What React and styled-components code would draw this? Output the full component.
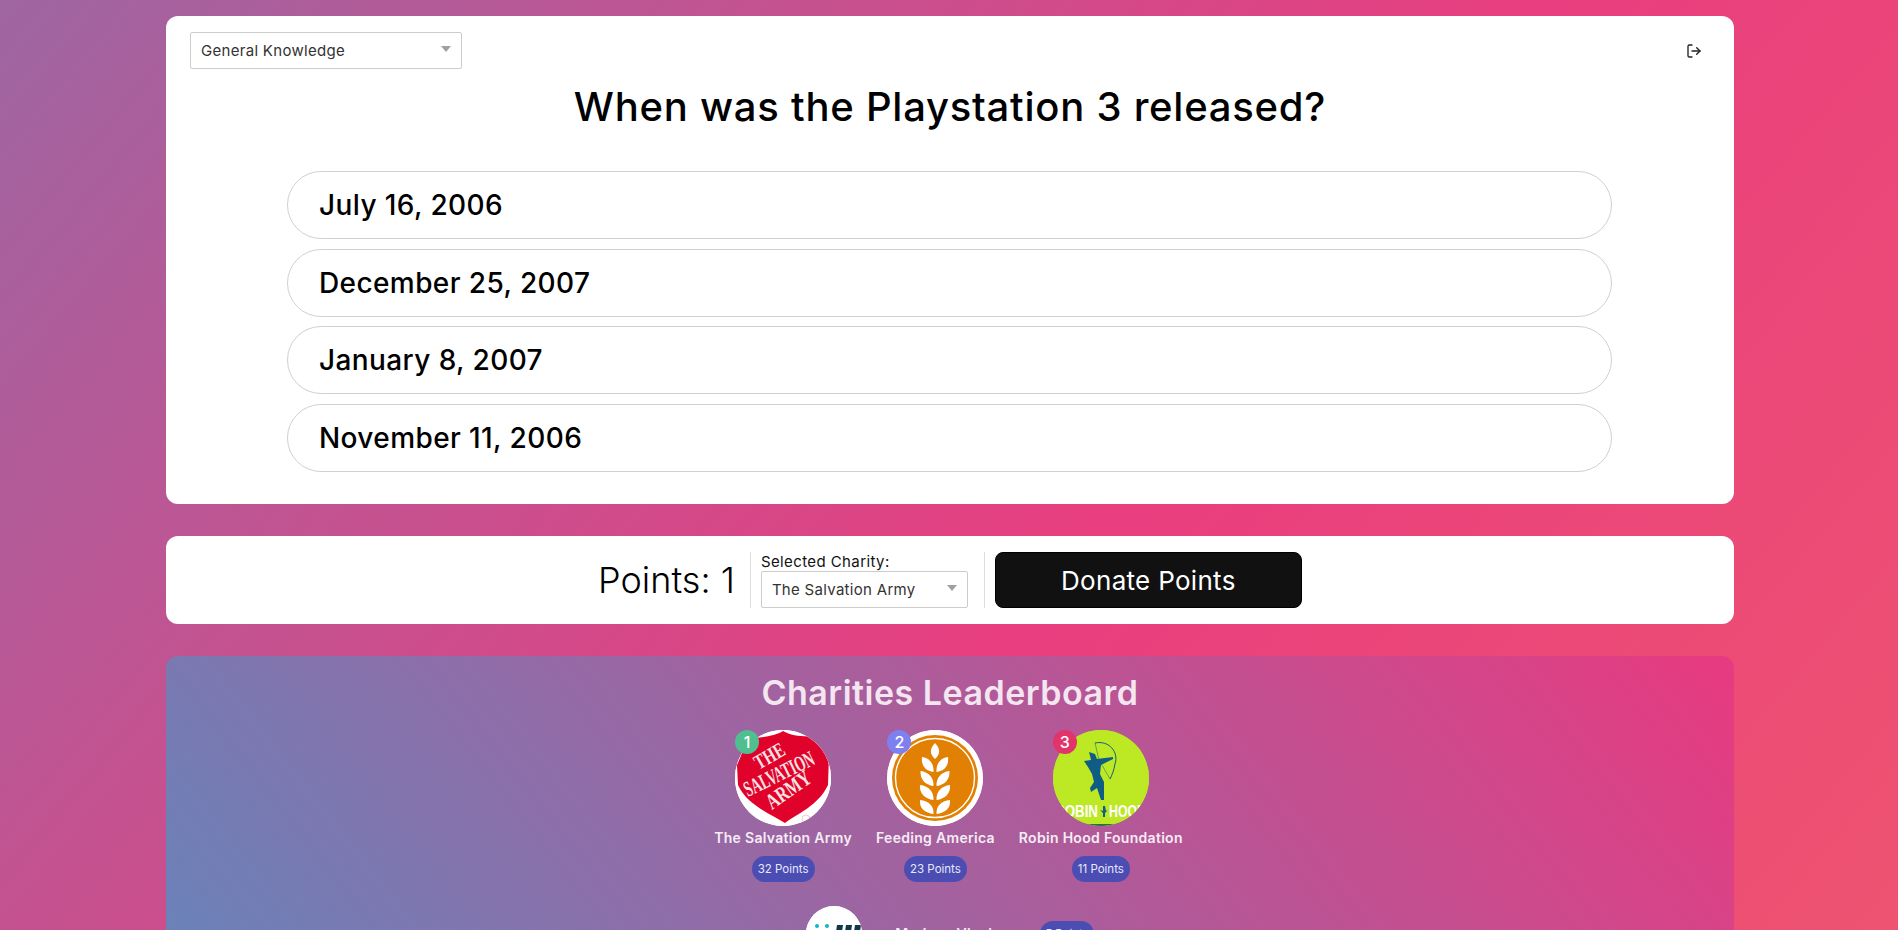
import React from 'react';
import styled, { createGlobalStyle } from 'styled-components';
import { LogOut } from 'lucide-react';

const FONT = `Inter, "Noto Sans", "Liberation Sans", sans-serif`;

const GlobalStyle = createGlobalStyle`
  html, body {
    margin: 0;
    padding: 0;
    height: 100%;
    overflow: hidden;
  }
  body {
    font-family: ${FONT};
    color: #000;
  }
  * { box-sizing: border-box; }
`;

const Page = styled.div`
  height: 930px;
  overflow: hidden;
  background: linear-gradient(130deg, #9e66a2 0%, #e93e7f 58%, #ee5370 100%);
  padding: 16px 0 0 2px;
  display: flex;
  flex-direction: column;
  align-items: center;
  gap: 32px;
`;

const Card = styled.section`
  width: 1568px;
  background: #fff;
  border-radius: 12px;
  flex-shrink: 0;
`;

const QuizCard = styled(Card)`
  height: 488px;
  padding: 16px 24px 32px;
`;

const QuizTop = styled.div`
  display: flex;
  justify-content: space-between;
  align-items: center;
`;

const SelectWrap = styled.div`
  position: relative;
  width: ${({ $width }) => $width}px;
  height: 37px;

  &::after {
    content: '';
    position: absolute;
    right: 11px;
    top: 14px;
    border-left: 5px solid transparent;
    border-right: 5px solid transparent;
    border-top: 6px solid #a0a0a0;
    pointer-events: none;
  }
`;

const Select = styled.select`
  appearance: none;
  width: 100%;
  height: 100%;
  background: #fff;
  border: 1px solid #ccc;
  border-radius: 2px;
  padding: 0 10px;
  font-family: ${FONT};
  font-size: 15px;
  letter-spacing: 0.3px;
  color: #333;
  outline: none;
`;

const IconButton = styled.button`
  border: 0;
  background: none;
  padding: 0;
  display: flex;
  margin-right: 8px;
  color: #222;
`;

const Question = styled.h1`
  margin: 15px 0 41px;
  text-align: center;
  font-size: 40px;
  line-height: 46px;
  font-weight: 500;
  letter-spacing: 0.75px;
`;

const Answers = styled.div`
  width: 1325px;
  margin-left: 97px;
  display: flex;
  flex-direction: column;
  gap: 9.5px;
`;

const Answer = styled.button`
  height: 68px;
  border: 1px solid #d0d0d0;
  border-radius: 34px;
  background: #fff;
  padding: 0 31px;
  text-align: left;
  font-family: ${FONT};
  font-size: 28px;
  font-weight: 500;
  letter-spacing: 0.4px;
  color: #000;
`;

const PointsCard = styled(Card)`
  height: 88px;
  display: flex;
  justify-content: center;
  align-items: center;
`;

const PointsText = styled.div`
  font-size: 36px;
  font-weight: 300;
  padding-right: 15px;
`;

const Divider = styled.div`
  width: 1px;
  height: 56px;
  background: #ddd;
`;

const CharityPicker = styled.div`
  padding: 0 16px 0 10px;
  display: flex;
  flex-direction: column;
  height: 56px;
`;

const PickerLabel = styled.label`
  font-size: 15px;
  line-height: 19px;
  letter-spacing: 0.4px;
  color: #111;
`;

const DonateButton = styled.button`
  margin-left: 10px;
  width: 307px;
  height: 56px;
  background: #111;
  color: #fff;
  border: 1px solid #000;
  border-radius: 8px;
  font-family: ${FONT};
  font-size: 26px;
  font-weight: 400;
  letter-spacing: 0.3px;
`;

const Board = styled.section`
  width: 1568px;
  height: 500px;
  flex-shrink: 0;
  border-radius: 12px;
  padding-top: 16px;
  background: linear-gradient(52deg, #5e89be 0%, #e83a80 100%);
  color: #fff;
  display: flex;
  flex-direction: column;
  align-items: center;
`;

const BoardTitle = styled.h2`
  margin: 0 0 16px;
  font-size: 34px;
  line-height: 42px;
  font-weight: 600;
  letter-spacing: 0.5px;
  color: #f3e6f1;
`;

const Podium = styled.div`
  display: flex;
  justify-content: center;
  gap: 24px;
  margin-left: -3px;
`;

const PodiumItem = styled.div`
  display: flex;
  flex-direction: column;
  align-items: center;
`;

const AvatarWrap = styled.div`
  position: relative;
  width: 96px;
  height: 96px;
`;

const Avatar = styled.div`
  width: 100%;
  height: 100%;
  border-radius: 50%;
  overflow: hidden;
  background: ${({ $bg }) => $bg};

  svg { display: block; }
`;

const RankBadge = styled.span`
  position: absolute;
  left: 0;
  top: 0;
  width: 24px;
  height: 24px;
  border-radius: 50%;
  background: ${({ $bg }) => $bg};
  color: #fff;
  font-size: 16px;
  font-weight: 500;
  display: flex;
  align-items: center;
  justify-content: center;
`;

const CharityName = styled.div`
  margin-top: 1px;
  font-size: 14px;
  line-height: 22px;
  font-weight: 600;
  letter-spacing: 0.3px;
  color: #f6ecf4;
  white-space: nowrap;
`;

const PointsPill = styled.span`
  margin-top: ${({ $flat }) => ($flat ? 0 : 7)}px;
  height: 26px;
  padding: 0 ${({ $flat }) => ($flat ? 5 : 6)}px;
  border-radius: 13px;
  background: #4b4db3;
  color: #e8e8fa;
  font-size: 11.5px;
  display: inline-flex;
  align-items: center;
  white-space: nowrap;
`;

const BoardRow = styled.div`
  margin-top: 24px;
  display: flex;
  align-items: center;
`;

const RowAvatar = styled.div`
  width: 56px;
  height: 56px;
  border-radius: 50%;
  overflow: hidden;
  background: #fff;
  margin-right: 33px;

  svg { display: block; }
`;

const RowName = styled(CharityName)`
  margin: 0;
  width: 145px;
`;

const SalvationLogo = () => (
  <svg width="96" height="96" viewBox="0 0 96 96">
    <rect width="96" height="96" fill="#fff" />
    <path d="M48 1 C56 6 70 7 80 6 C84 12 90 20 94 25 L93 55 C84 75 62 84 50 93 C36 84 12 75 3 55 L2 35 C6 27 9 17 12 8 C26 8 40 6 48 1 Z" fill="#e0022b" />
    <g fill="#f8e2e2" fontFamily='"Liberation Serif", serif' fontWeight="700">
      <text x="24" y="40" fontSize="21" textLength="32" lengthAdjust="spacingAndGlyphs" transform="rotate(-30 24 40)">THE</text>
      <text x="13" y="67" fontSize="22" textLength="76" lengthAdjust="spacingAndGlyphs" transform="rotate(-26 13 67)">SALVATION</text>
      <text x="37" y="80" fontSize="22" textLength="50" lengthAdjust="spacingAndGlyphs" transform="rotate(-35 37 80)">ARMY</text>
    </g>
    <circle cx="71" cy="89" r="4" fill="none" stroke="#eeb9bd" strokeWidth="0.8" />
  </svg>
);

const FeedingLogo = () => (
  <svg width="96" height="96" viewBox="0 0 96 96">
    <circle cx="48" cy="48" r="48" fill="#fff" />
    <circle cx="48" cy="48" r="43" fill="#e28003" />
    <circle cx="48" cy="48" r="39.5" fill="none" stroke="#fff" strokeWidth="1.4" />
    <g fill="#fff">
      <path d="M48 13 C43 18 42 24 48 29 C54 24 53 18 48 13 Z" />
      <path d="M46.5 42 C47 34 43 28 35 27 C34 35 38 41 46.5 42 Z" />
      <path d="M49.5 42 C49 34 53 28 61 27 C62 35 58 41 49.5 42 Z" />
      <path d="M46.5 56 C47 48 42 42 33.5 41 C33 49 38 55 46.5 56 Z" />
      <path d="M49.5 56 C49 48 54 42 62.5 41 C63 49 58 55 49.5 56 Z" />
      <path d="M46.5 70 C47 62 42 56 33 55 C32 63 38 69 46.5 70 Z" />
      <path d="M49.5 70 C49 62 54 56 63 55 C64 63 58 69 49.5 70 Z" />
      <path d="M46.5 84 C47 76 42 71 33 70 C32 78 38 83 46.5 84 Z" />
      <path d="M49.5 84 C49 76 54 71 63 70 C64 78 58 83 49.5 84 Z" />
    </g>
  </svg>
);

const RobinLogo = () => (
  <svg width="96" height="96" viewBox="0 0 96 96">
    <rect width="96" height="96" fill="#bce824" />
    <path d="M36 22 L42 24 L44 29 L60 27 L60 29 L48 35 L47 44 L51 52 L51 70 L48 70 L44 58 L38 62 L37 58 L41 52 L39 44 L35 37 L31 31 L38 30 Z" fill="#0f5d85" />
    <path d="M42 13 C56 10 66 22 62 34 C61 40 59 45 57 49" fill="none" stroke="#0f5d85" strokeWidth="1" />
    <path d="M42 13 L46 30 L57 49" fill="none" stroke="#0f5d85" strokeWidth="0.5" />
    <path d="M50 76 L52 76 L53 81 L55 80 L52 83 L52 87 L50 87 L50 83 L47 80 L50 81 Z" fill="#0f5d85" />
    <g fill="#fff" fontFamily='"Liberation Sans", sans-serif' fontSize="16" fontWeight="700">
      <text x="2" y="87" textLength="43" lengthAdjust="spacingAndGlyphs">ROBIN</text>
      <text x="56" y="87" textLength="37" lengthAdjust="spacingAndGlyphs">HOOD</text>
    </g>
    <rect x="0" y="94" width="96" height="2" fill="#2f6a4f" />
  </svg>
);

const RowLogo = () => (
  <svg width="56" height="56" viewBox="0 0 56 56">
    <rect width="56" height="56" fill="#fff" />
    <circle cx="11" cy="20" r="2" fill="#14b5c4" />
    <circle cx="21" cy="20" r="2" fill="#14b5c4" />
    <g fill="#12384a">
      <path d="M31 19 L37 19 L34 40 L28 40 Z" />
      <path d="M40 19 L46 19 L43 40 L37 40 Z" />
      <path d="M49 19 L55 19 L52 40 L46 40 Z" />
    </g>
  </svg>
);

const podium = [
  { name: 'The Salvation Army', points: 32, color: '#4fbf8f', logo: <SalvationLogo />, bg: '#fff' },
  { name: 'Feeding America', points: 23, color: '#7f80f0', logo: <FeedingLogo />, bg: '#fff' },
  { name: 'Robin Hood Foundation', points: 11, color: '#e2336b', logo: <RobinLogo />, bg: '#bce824' },
];

const answers = ['July 16, 2006', 'December 25, 2007', 'January 8, 2007', 'November 11, 2006'];

const App = () => {
  return (
    <Page>
      <GlobalStyle />
      <QuizCard>
        <QuizTop>
          <SelectWrap $width={272}>
            <Select defaultValue="General Knowledge">
              <option>General Knowledge</option>
            </Select>
          </SelectWrap>
          <IconButton aria-label="Log out">
            <LogOut size={16} strokeWidth={2} />
          </IconButton>
        </QuizTop>
        <Question>When was the Playstation 3 released?</Question>
        <Answers>
          {answers.map((answer) => (
            <Answer key={answer}>{answer}</Answer>
          ))}
        </Answers>
      </QuizCard>

      <PointsCard>
        <PointsText>Points: 1</PointsText>
        <Divider />
        <CharityPicker>
          <PickerLabel>Selected Charity:</PickerLabel>
          <SelectWrap $width={207}>
            <Select defaultValue="The Salvation Army">
              <option>The Salvation Army</option>
            </Select>
          </SelectWrap>
        </CharityPicker>
        <Divider />
        <DonateButton>Donate Points</DonateButton>
      </PointsCard>

      <Board>
        <BoardTitle>Charities Leaderboard</BoardTitle>
        <Podium>
          {podium.map((item, i) => (
            <PodiumItem key={item.name}>
              <AvatarWrap>
                <Avatar $bg={item.bg}>{item.logo}</Avatar>
                <RankBadge $bg={item.color}>{i + 1}</RankBadge>
              </AvatarWrap>
              <CharityName>{item.name}</CharityName>
              <PointsPill>{item.points} Points</PointsPill>
            </PodiumItem>
          ))}
        </Podium>
        <BoardRow>
          <RowAvatar><RowLogo /></RowAvatar>
          <RowName>Marlene Vincler</RowName>
          <PointsPill $flat>5 Points</PointsPill>
        </BoardRow>
      </Board>
    </Page>
  );
};

export default App;
